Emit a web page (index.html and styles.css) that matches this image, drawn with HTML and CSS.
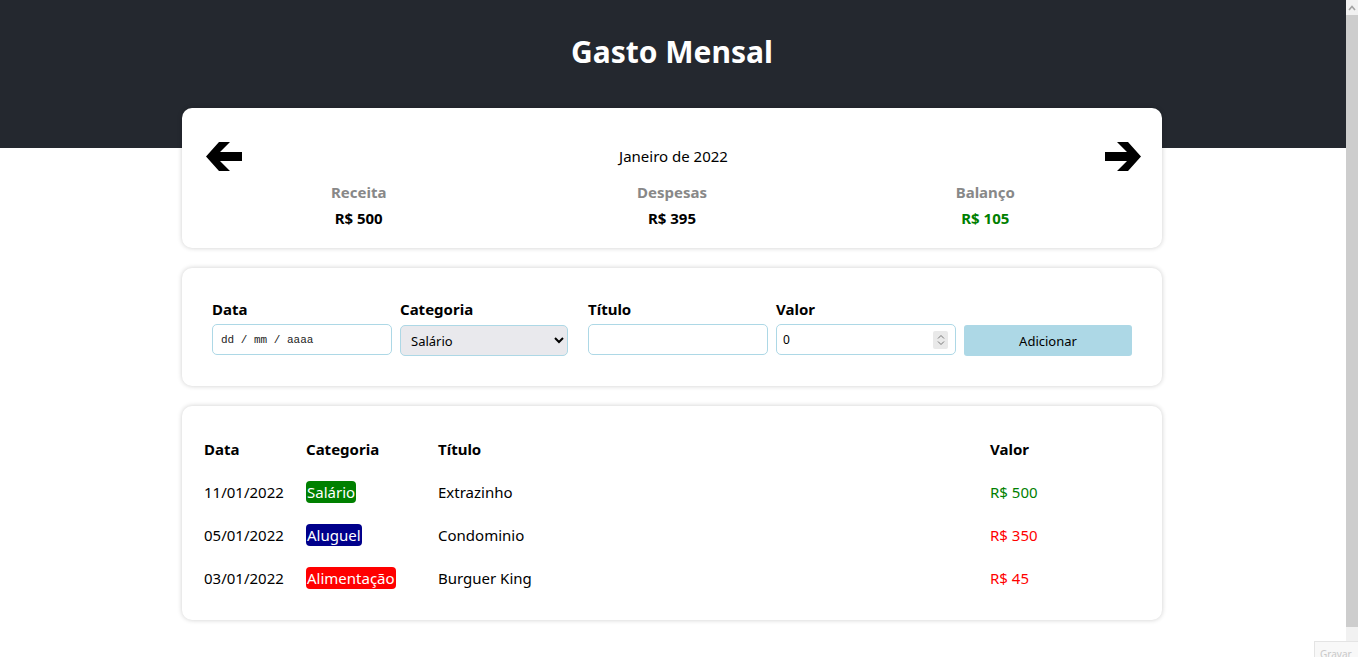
FILE: index.html
```html
<!DOCTYPE html>
<html lang="pt-BR">
<head>
<meta charset="utf-8">
<title>Gasto Mensal</title>
<link rel="stylesheet" href="styles.css">
</head>
<body>
<header class="header">
  <h1 class="header-title">Gasto Mensal</h1>
</header>
<main class="container">
  <section class="card info">
    <div class="month-row">
      <button class="arrow" aria-label="Mês anterior">
        <svg width="36" height="29" viewBox="0 0 36 29"><polygon points="0,14.5 13,0 24,0 14,10 36,10 36,19 14,19 24,29 13,29" fill="#000"/></svg>
      </button>
      <div class="month">Janeiro de 2022</div>
      <button class="arrow" aria-label="Próximo mês">
        <svg width="36" height="29" viewBox="0 0 36 29"><polygon points="36,14.5 23,0 12,0 22,10 0,10 0,19 22,19 12,29 23,29" fill="#000"/></svg>
      </button>
    </div>
    <div class="resume">
      <div class="resume-item">
        <div class="resume-label">Receita</div>
        <div class="resume-value">R$ 500</div>
      </div>
      <div class="resume-item">
        <div class="resume-label">Despesas</div>
        <div class="resume-value">R$ 395</div>
      </div>
      <div class="resume-item">
        <div class="resume-label">Balanço</div>
        <div class="resume-value positive">R$ 105</div>
      </div>
    </div>
  </section>

  <section class="card form">
    <label class="field">
      <span class="field-label">Data</span>
      <input class="input date" type="text" placeholder="dd / mm / aaaa">
    </label>
    <label class="field">
      <span class="field-label">Categoria</span>
      <select class="input select">
        <option>Salário</option>
        <option>Aluguel</option>
        <option>Alimentação</option>
      </select>
    </label>
    <label class="field">
      <span class="field-label">Título</span>
      <input class="input" type="text">
    </label>
    <label class="field">
      <span class="field-label">Valor</span>
      <span class="number-wrap">
        <input class="input number" type="text" value="0">
        <span class="spin"><svg width="10" height="14" viewBox="0 0 10 14"><path d="M2 5.5 L5 2.5 L8 5.5 M2 8.5 L5 11.5 L8 8.5" fill="none" stroke="#777" stroke-width="1"/></svg></span>
      </span>
    </label>
    <div class="field field-btn">
      <button class="add-btn">Adicionar</button>
    </div>
  </section>

  <section class="card list">
    <table class="table">
      <thead>
        <tr>
          <th class="col-date">Data</th>
          <th class="col-cat">Categoria</th>
          <th class="col-title">Título</th>
          <th>Valor</th>
        </tr>
      </thead>
      <tbody>
        <tr>
          <td>11/01/2022</td>
          <td><span class="badge green">Salário</span></td>
          <td>Extrazinho</td>
          <td class="positive-v">R$ 500</td>
        </tr>
        <tr>
          <td>05/01/2022</td>
          <td><span class="badge navy">Aluguel</span></td>
          <td>Condominio</td>
          <td class="negative-v">R$ 350</td>
        </tr>
        <tr>
          <td>03/01/2022</td>
          <td><span class="badge red">Alimentação</span></td>
          <td>Burguer King</td>
          <td class="negative-v">R$ 45</td>
        </tr>
      </tbody>
    </table>
  </section>
</main>
<div class="scrollbar" aria-hidden="true">
  <div class="scroll-up"><svg width="8" height="6" viewBox="0 0 8 6"><path d="M1 5 L4 1.5 L7 5" fill="none" stroke="#a3a3a3" stroke-width="1.6"/></svg></div>
  <div class="scroll-thumb"></div>
</div>
<div class="rec-widget">Gravar</div>
</body>
</html>
```

FILE: styles.css
```css
* { box-sizing: border-box; }

body {
  margin: 0 12px 0 0;
  font-family: "Noto Sans", "Segoe UI", sans-serif;
  font-size: 16px;
  color: #000;
  background: #fff;
}

.header {
  background: #24282f;
  height: 148px;
  padding-top: 31px;
  text-align: center;
}

.header-title {
  margin: 0;
  color: #fff;
  font-size: 30px;
  font-weight: 700;
  line-height: 42px;
  padding-right: 2px;
}

.container {
  width: 980px;
  margin: -40px 0 0 calc(50% - 491px);
  padding-bottom: 38px;
}

.card {
  background: #fff;
  border-radius: 10px;
  box-shadow: 0 0 5px rgba(0, 0, 0, 0.2);
  margin-bottom: 20px;
}

.info {
  padding: 20px 20px 19px;
}

.month-row {
  display: flex;
  align-items: center;
  justify-content: space-between;
  padding: 14px 1px 0 4px;
}

.arrow {
  border: 0;
  background: none;
  padding: 0;
  width: 36px;
  height: 29px;
  cursor: pointer;
  display: flex;
}

.month {
  font-size: 15px;
  margin-top: -1px;
}

.resume {
  display: flex;
  margin-top: 10px;
}

.resume-item {
  flex: 1;
  text-align: center;
}

.resume-label {
  color: #888;
  font-weight: 700;
  font-size: 15px;
  line-height: 22px;
}

.resume-value {
  font-weight: 700;
  font-size: 15px;
  line-height: 22px;
  margin-top: 4px;
}

.positive { color: #008000; }

.form {
  display: flex;
  gap: 8px;
  padding: 31px 30px 30px;
}

.field {
  display: flex;
  flex-direction: column;
  width: 180px;
}

.field-btn {
  width: 168px;
  justify-content: flex-end;
}

.field-label {
  font-weight: 700;
  font-size: 15px;
  line-height: 20px;
  margin-bottom: 5px;
}

.input {
  height: 31px;
  border: 1px solid #add8e6;
  border-radius: 5px;
  padding: 0 8px;
  font-family: "Noto Sans", sans-serif;
  font-size: 13px;
  background: #fff;
  outline: none;
  width: 180px;
}

.date {
  font-family: "Liberation Mono", monospace;
  font-size: 11px;
}
.date::placeholder { color: #222; }

.select {
  width: 168px;
  background: #e9e9ed;
  color: #000;
  padding-left: 6px;
  margin-top: 1px;
}

.number-wrap {
  position: relative;
  display: block;
}

.number {
  padding-left: 6px;
  font-size: 12px;
}

.spin {
  position: absolute;
  right: 8px;
  top: 7px;
  width: 15px;
  height: 18px;
  background: #e9e9e9;
  border-radius: 2px;
  display: flex;
  align-items: center;
  justify-content: center;
}

.add-btn {
  height: 31px;
  width: 168px;
  border: 0;
  border-radius: 3px;
  background: #add8e6;
  font-family: "Noto Sans", sans-serif;
  font-size: 13px;
  color: #000;
  cursor: pointer;
}

.list {
  padding: 22px 20px 20px;
}

.table {
  width: 100%;
  border-collapse: collapse;
  font-size: 15px;
}

.table th {
  text-align: left;
  font-weight: 700;
  padding: 10px 2px 11px;
  line-height: 22px;
}

.table td {
  padding: 10px 2px 11px;
  line-height: 22px;
}

.col-date { width: 102px; }
.col-cat { width: 132px; }
.col-title { width: 552px; }

.badge {
  color: #fff;
  border-radius: 4px;
  padding: 1px 1px;
}
.green { background: #008000; }
.navy { background: #00008b; }
.red { background: #ff0000; }

.positive-v { color: #008000; }
.negative-v { color: #ff0000; }

.scrollbar {
  position: fixed;
  top: 0;
  right: 0;
  width: 12px;
  height: 100%;
  background: #f1f1f1;
}

.scroll-up {
  height: 15px;
  display: flex;
  align-items: center;
  justify-content: center;
}

.scroll-thumb {
  height: 612px;
  background: #cdcdcd;
}

.rec-widget {
  position: fixed;
  left: 1314px;
  top: 641px;
  width: 44px;
  height: 16px;
  overflow: hidden;
  border: 1px solid #e4e4e4;
  border-right: 0;
  border-bottom: 0;
  background: #f8f8f8;
  color: #c8c8c8;
  font-size: 10px;
  line-height: 12px;
  padding: 6px 0 0 5px;
  white-space: nowrap;
}
```
